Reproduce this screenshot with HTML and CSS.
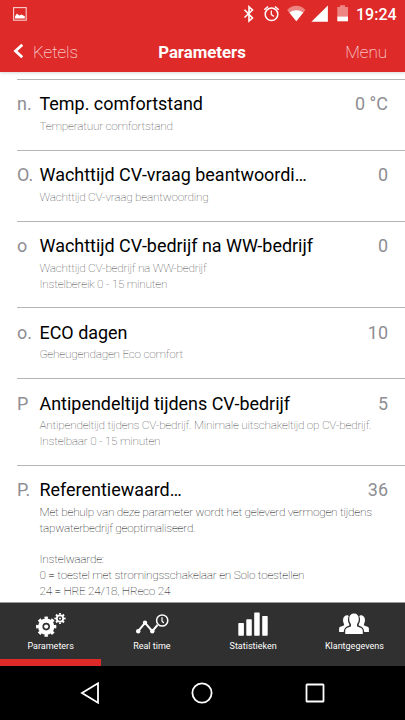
FILE: index.html
```html
<!DOCTYPE html>
<html lang="nl">
<head>
<meta charset="utf-8">
<title>Parameters</title>
<link rel="stylesheet" href="styles.css">
</head>
<body>
<div class="screen">
  <header class="header">
    <div class="status">
      <svg class="photo" width="14" height="14" viewBox="0 0 14 14"><rect x=".6" y=".6" width="12.6" height="12.6" fill="none" stroke="#f7cfcd" stroke-width="1.1"/><path d="M2 11.6V9.2L4 6.5 6.2 8.6 8.4 7.6 11.8 9.2V11.6Z" fill="#fff"/></svg>
      <svg class="signals" width="110" height="22" viewBox="0 0 110 22">
        <path d="M1.500 8.800 9.500 17 6 20V5.800L9.500 9 1.500 16.500" fill="none" stroke="#fff" stroke-width="1.600"/>
        <g fill="none" stroke="#fff" stroke-width="1.500"><circle cx="28.500" cy="13.300" r="6.300"/><path d="M28.300 9.500V13.600L31 15.500" stroke-width="1.200"/><path d="M21.300 8.700 25 5.500M35.700 8.700 32 5.500"/></g>
        <path d="M44.200 9C49.500 3.400 57 3.400 62.400 9L53.300 20.200Z" fill="#ed8582"/>
        <path d="M46.300 11.600C50.500 8.300 56.200 8.300 60.300 11.600L53.300 20.200Z" fill="#fff"/>
        <path d="M68.400 20.800 84.900 4.500V20.800Z" fill="#fff"/>
        <path d="M94.300 6H97V4.300H102V6H105V16H94.300Z" fill="#ed8582"/><path d="M94.300 15.600H105V20.300H94.300Z" fill="#fff"/>
      </svg>
      <span class="clock">19:24</span>
    </div>
    <div class="nav">
      <a class="back"><svg width="10" height="16" viewBox="0 0 10 16"><path d="M9.300 1.700 2.500 8 9.300 14.300" fill="none" stroke="#fff" stroke-width="2.800"/></svg><span>Ketels</span></a>
      <h1>Parameters</h1>
      <a class="menu">Menu</a>
    </div>
  </header>
  <main class="list">
    <section class="row"><div class="head"><b>n.</b><h2>Temp. comfortstand</h2><em>0 °C</em></div><p>Temperatuur comfortstand</p></section>
    <section class="row"><div class="head"><b>O.</b><h2>Wachttijd CV-vraag beantwoordi…</h2><em>0</em></div><p>Wachttijd CV-vraag beantwoording</p></section>
    <section class="row"><div class="head"><b>o</b><h2>Wachttijd CV-bedrijf na WW-bedrijf</h2><em>0</em></div><p>Wachttijd CV-bedrijf na WW-bedrijf<br>Instelbereik 0 - 15 minuten</p></section>
    <section class="row"><div class="head"><b>o.</b><h2>ECO dagen</h2><em>10</em></div><p>Geheugendagen Eco comfort</p></section>
    <section class="row"><div class="head"><b>P</b><h2>Antipendeltijd tijdens CV-bedrijf</h2><em>5</em></div><p>Antipendeltijd tijdens CV-bedrijf. Minimale uitschakeltijd op CV-bedrijf.<br>Instelbaar 0 - 15 minuten</p></section>
    <section class="row dark"><div class="head"><b>P.</b><h2>Referentiewaard…</h2><em>36</em></div><p>Met behulp van deze parameter wordt het geleverd vermogen tijdens<br>tapwaterbedrijf geoptimaliseerd.<br><br>Instelwaarde:<br>0 = toestel met stromingsschakelaar en Solo toestellen<br>24 = HRE 24/18, HReco 24</p></section>
  </main>
  <nav class="tabs">
    <a class="tab active">
      <svg width="32" height="26" viewBox="0 0 32 26" fill="none" stroke="#fff"><circle cx="11.200" cy="14.600" r="6" stroke-width="4.400"/><circle cx="11.200" cy="14.600" r="8.800" stroke-width="2.700" pathLength="80" stroke-dasharray="5 5" stroke-dashoffset="2.500"/><circle cx="11.200" cy="14.600" r="2.100" fill="#fff" stroke="none"/><circle cx="25" cy="6.500" r="3.200" stroke-width="1.800"/><circle cx="25" cy="6.500" r="4.700" stroke-width="1.800" pathLength="80" stroke-dasharray="5 5" stroke-dashoffset="2.500"/><circle cx="25" cy="6.500" r="1" fill="#fff" stroke="none"/></svg>
      <span>Parameters</span></a>
    <a class="tab">
      <svg width="34" height="26" viewBox="0 0 34 26" fill="none" stroke="#fff"><path d="M3.200 19.200 10 10.800 17.300 19.200 22.500 13" stroke-width="2"/><g fill="#fff" stroke="none"><circle cx="3.200" cy="19.200" r="2.200"/><circle cx="10" cy="10.800" r="2.200"/><circle cx="17.300" cy="19.200" r="2.200"/></g><circle cx="27.200" cy="8.500" r="5.600" stroke-width="1.500"/><path d="M27 5.300V9L28.800 11" stroke-width="1.200"/></svg>
      <span>Real time</span></a>
    <a class="tab">
      <svg width="30" height="26" viewBox="0 0 30 26" fill="#fff"><rect x=".3" y="11" width="5.600" height="12.800" rx=".7"/><rect x="8.300" y="7.300" width="5.500" height="16.500" rx=".7"/><rect x="16.200" y=".4" width="5.500" height="23.400" rx=".7"/><rect x="24.200" y="4" width="5.500" height="19.800" rx=".7"/></svg>
      <span>Statistieken</span></a>
    <a class="tab">
      <svg width="32" height="26" viewBox="0 0 32 26" fill="#fff"><path id="side" d="M5 8C5 4.500 7.500 3 9.500 3.200 10.300 3.300 10.800 3.700 10.600 4.500 9.400 7 9.800 9.800 11.400 12.500L11.200 13.600C8 15 6 16 5.800 20H1.100V16.500C1.100 14.600 4.500 14.300 6.200 13.300 6.200 12 5 10.500 5 8Z"/><use href="#side" transform="matrix(-1 0 0 1 32 0)"/><path d="M11.200 7C11.200 3.500 13 1.600 16 1.600S20.800 3.500 20.800 7C20.800 9.500 19.700 11.300 19 12.200V14.300C21 15.400 24.800 16 24.800 18.600V21.400C24.800 21.900 24.400 22 24 22H8C7.600 22 7.200 21.900 7.200 21.400V18.600C7.200 16 11 15.400 13 14.300V12.200C12.300 11.300 11.200 9.500 11.200 7Z" stroke="#303030" stroke-width="1" paint-order="stroke"/></svg>
      <span>Klantgegevens</span></a>
  </nav>
  <footer class="system">
    <svg width="20" height="22" viewBox="0 0 20 22"><path d="M18 1.300V20.700L2 11Z"/></svg>
    <svg width="22" height="22" viewBox="0 0 22 22"><circle cx="11" cy="11" r="9.600"/></svg>
    <svg width="20" height="22" viewBox="0 0 20 22"><rect x="1.500" y="2.500" width="17" height="17" rx=".6"/></svg>
  </footer>
</div>
</body>
</html>
```
FILE: styles.css
```css
* { box-sizing: border-box; margin: 0; padding: 0; }
body { font-family: Roboto, "Liberation Sans", sans-serif; background: #fff; }
svg { display: block; flex: none; }
.screen { width: 405px; height: 720px; display: flex; flex-direction: column; overflow: hidden; }
.header { flex: none; height: 72px; background: #de2b2a; color: #fff; box-shadow: 0 1px 3px rgba(0,0,0,.16); }
.status { height: 28px; display: flex; align-items: flex-start; padding-left: 13px; }
.photo { margin-top: 7px; }
.signals { margin: 1px 0 0 216px; }
.clock { margin: 5px 0 0 3px; font-size: 16px; line-height: 20px; font-weight: 500; }
.nav { height: 44px; display: grid; grid-template-columns: 1fr auto 1fr; align-items: center; padding: 4px 18px 0 13px; }
.back { display: flex; align-items: center; gap: 10px; font-size: 17px; font-weight: 100; color: #fff; }
.back svg { margin-top: -3px; }
.nav h1 { font-size: 16.800px; font-weight: 700; padding-left: 4px; }
.menu { text-align: right; font-size: 17px; font-weight: 100; color: #fff; }
.list { flex: none; height: 530px; overflow: hidden; padding: 7px 0 0 17px; }
.row { border-top: 1px solid #b5b5b5; height: auto; padding: 12.400px 17px 15.100px 0; }
.head { display: flex; height: 26.600px; align-items: flex-start; font-size: 17.950px; line-height: 24px; }
.head b { flex: none; width: 22.500px; font-weight: 400; color: #8e8e93; }
.head h2 { flex: 1; font-size: inherit; font-weight: 400; color: #000; white-space: nowrap; }
.head em { font-style: normal; color: #8e8e93; }
.row p { padding-left: 22.500px; font-size: 11.800px; letter-spacing: -.23px; line-height: 15.800px; font-weight: 100; color: #444; white-space: nowrap; }
.row.dark p { color: #000; }
.tabs { flex: none; height: 64px; display: grid; grid-template-columns: repeat(4, 1fr); background: #303030; border-top: 1px solid #999; }
.tab { display: flex; flex-direction: column; align-items: center; padding-top: 9px; color: #fff; font-size: 9px; line-height: 14px; }
.tab span { margin-top: 1px; }
.active { border-bottom: 7px solid #de2b2a; }
.system { flex: 1; display: flex; justify-content: center; align-items: center; gap: 91.500px; padding-right: 1px; background: #000; }
.system svg { fill: none; stroke: #fff; stroke-width: 1.800; }
```
